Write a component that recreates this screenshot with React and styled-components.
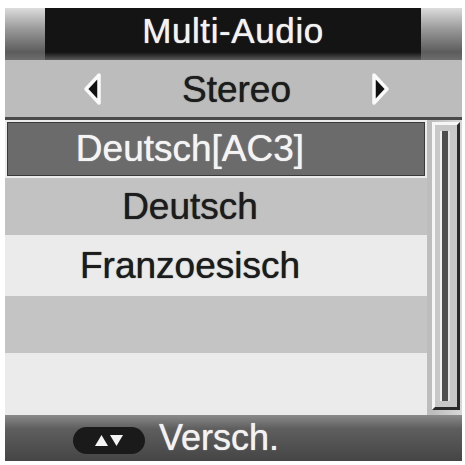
import styled, { createGlobalStyle } from "styled-components";

const GlobalStyle = createGlobalStyle`
  html, body {
    margin: 0;
    background: #ffffff;
  }
  body {
    font-family: "Liberation Sans", Arial, sans-serif;
  }
`;

const rows = [
  { label: "Deutsch[AC3]", selected: true, bg: "#6b6b6b", height: 58 },
  { label: "Deutsch", bg: "#c2c2c2", height: 57 },
  { label: "Franzoesisch", bg: "#ebebeb", height: 61 },
  { label: "", bg: "#c4c4c4", height: 57 },
  { label: "", bg: "#ebebeb", height: 62 },
];

function ArrowLeft() {
  return (
    <svg width="20" height="34" viewBox="0 0 20 34">
      <polygon
        points="16,3 3,17 16,31"
        fill="#111"
        stroke="#fafafa"
        strokeWidth="3.5"
        strokeLinejoin="round"
      />
    </svg>
  );
}

function ArrowRight() {
  return (
    <svg width="20" height="34" viewBox="0 0 20 34">
      <polygon
        points="4,3 17,17 4,31"
        fill="#111"
        stroke="#fafafa"
        strokeWidth="3.5"
        strokeLinejoin="round"
      />
    </svg>
  );
}

function UpDownKey() {
  return (
    <svg width="30" height="15" viewBox="0 0 30 15">
      <polygon points="1,13 7.5,2 14,13" fill="#f4f4f4" />
      <polygon points="16,2 29,2 22.5,13" fill="#f4f4f4" />
    </svg>
  );
}

export default function App() {
  return (
    <>
      <GlobalStyle />
      <Screen>
        <Header>
          <HeaderSide />
          <Title>Multi-Audio</Title>
          <HeaderSide />
        </Header>
        <OptionRow>
          <ArrowLeft />
          <OptionLabel>Stereo</OptionLabel>
          <ArrowRight />
        </OptionRow>
        <Body>
          <List>
            {rows.map((row, i) => (
              <Row
                key={i}
                $bg={row.bg}
                $height={row.height}
                $selected={row.selected}
              >
                {row.label}
              </Row>
            ))}
          </List>
          <ScrollArea>
            <ScrollFrame>
              <ScrollTrack />
            </ScrollFrame>
          </ScrollArea>
        </Body>
        <Footer>
          <KeyPill>
            <UpDownKey />
          </KeyPill>
          <FooterLabel>Versch.</FooterLabel>
        </Footer>
      </Screen>
    </>
  );
}

const Screen = styled.div`
  width: 457px;
  margin: 8px 0 0 5px;
  display: flex;
  flex-direction: column;
  background: #bdbdbd;
`;

const Header = styled.div`
  height: 52px;
  display: grid;
  grid-template-columns: 40px 1fr 41px;
  background: linear-gradient(#141414 0%, #141414 85%, #5a5a5a 100%);
`;

const HeaderSide = styled.div`
  background: linear-gradient(#dcdcdc 0%, #9a9a9a 40%, #5c5c5c 85%, #6e6e6e 100%);
`;

const Title = styled.div`
  display: flex;
  align-items: center;
  justify-content: center;
  padding-bottom: 6px;
  color: #f2f2f2;
  font-size: 35px;
  letter-spacing: 0.6px;
  text-shadow: 0 0 1px #f2f2f2;
`;

const OptionRow = styled.div`
  height: 57px;
  display: flex;
  align-items: center;
  padding: 0 72px 0 78px;
  justify-content: space-between;
  background: #bcbcbc;
  color: #1c1c1c;
`;

const OptionLabel = styled.span`
  font-size: 37px;
  padding-top: 2px;
  text-shadow: 0 0 1px #1c1c1c;
`;

const Body = styled.div`
  display: flex;
  border-top: 3px solid #4a4a4a;
  height: 295px;
`;

const List = styled.div`
  flex: 1;
  display: flex;
  flex-direction: column;
`;

const Row = styled.div`
  height: ${(p) => p.$height}px;
  box-sizing: border-box;
  display: flex;
  align-items: center;
  justify-content: center;
  padding-right: 52px;
  background: ${(p) => p.$bg};
  color: ${(p) => (p.$selected ? "#f4f4f4" : "#1c1c1c")};
  text-shadow: 0 0 1px ${(p) => (p.$selected ? "#f4f4f4" : "#1c1c1c")};
  font-size: 37px;
  border: ${(p) => (p.$selected ? "2px solid #ececec" : "none")};
  box-shadow: ${(p) => (p.$selected ? "inset 0 0 0 1px #3a3a3a" : "none")};
`;

const ScrollArea = styled.div`
  width: 35px;
  display: flex;
  flex-direction: column;
  padding: 2px 2px 5px 5px;
  box-sizing: border-box;
  background: linear-gradient(90deg, #bdbdbd 0%, #bdbdbd 15%, #d8d8d8 100%);
`;

const ScrollFrame = styled.div`
  flex: 1;
  border: 3px solid #f6f6f6;
  border-right-color: #2a2a2a;
  border-bottom-color: #2a2a2a;
  background: #c8c8c8;
  padding: 6px 7px 6px 5px;
  display: flex;
`;

const ScrollTrack = styled.div`
  flex: 1;
  background: #4e4e4e;
  border-left: 2px solid #f0f0f0;
  border-right: 2px solid #e2e2e2;
`;

const Footer = styled.div`
  height: 46px;
  display: flex;
  align-items: center;
  gap: 14px;
  padding-left: 68px;
  background: linear-gradient(#8a8a8a 0%, #5e5e5e 30%, #454545 100%);
`;

const KeyPill = styled.div`
  width: 72px;
  height: 27px;
  border-radius: 14px;
  background: #1a1a1a;
  display: flex;
  align-items: center;
  justify-content: center;
  margin-top: 4px;
`;

const FooterLabel = styled.span`
  color: #f2f2f2;
  font-size: 36px;
  text-shadow: 0 0 1px #f2f2f2;
`;
